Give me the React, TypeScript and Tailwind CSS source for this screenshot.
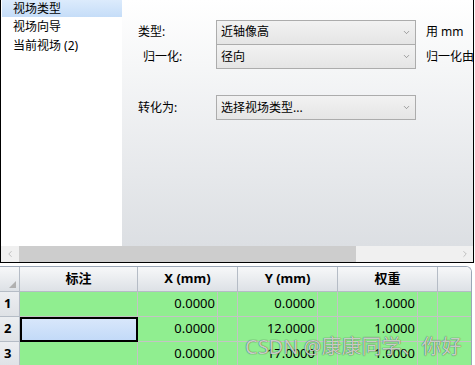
import { ChevronDown, ChevronLeft, ChevronRight } from 'lucide-react';

// Field-type editor panel: tree on the left, option form on the right,
// data grid of field points underneath.

const TREE_ITEMS = ['视场类型', '视场向导', '当前视场 (2)'];

const ROWS = [
  { id: 1, x: '0.0000', y: '0.0000', w: '1.0000' },
  { id: 2, x: '0.0000', y: '12.0000', w: '1.0000' },
  { id: 3, x: '0.0000', y: '17.0000', w: '1.0000' },
];

function Select({ value }: { value: string }) {
  return (
    <div className="w-[200px] shrink-0 h-[25px] border border-[#acacac] bg-gradient-to-b from-[#f2f2f2] to-[#e5e5e5] flex items-center justify-between pl-[4px] pr-[4px]">
      <span className="text-[12px] text-black">{value}</span>
      <ChevronDown size={9} strokeWidth={1.5} className="text-[#606060]" />
    </div>
  );
}

function App() {
  return (
    <div
      className="w-[475px] h-[365px] bg-white relative overflow-hidden text-black"
      style={{ fontFamily: '"Noto Sans", "Noto Sans CJK SC", sans-serif' }}
    >
      {/* Top panel */}
      <div className="w-[474px] h-[263px] border-l border-r border-b border-black flex flex-col">
        <div className="flex h-[246px]">
          {/* Tree */}
          <div className="w-[121px] shrink-0 bg-white pl-[1px]">
            {TREE_ITEMS.map((item, i) => (
              <div
                key={item}
                className={`pl-[11px] flex items-center text-[12px] leading-none ${
                  i === 0 ? 'h-[17px] bg-gradient-to-b from-[#dcebfc] to-[#c5ddf8]' : 'h-[19px]'
                }`}
              >
                {item}
              </div>
            ))}
          </div>
          {/* Form */}
          <div className="flex-1 min-w-0 bg-gradient-to-b from-white to-[#dcdfe3] pt-[20px] pl-[16px] overflow-hidden">
            <div className="flex items-center h-[24px]">
              <span className="w-[78px] shrink-0 text-[12px]">类型:</span>
              <Select value="近轴像高" />
              <span className="ml-[10px] shrink-0 text-[12px] whitespace-nowrap">用 mm</span>
            </div>
            <div className="flex items-center h-[25px]">
              <span className="w-[78px] shrink-0 pl-[5px] text-[12px]">归一化:</span>
              <Select value="径向" />
              <span className="ml-[10px] shrink-0 text-[12px] whitespace-nowrap">归一化由</span>
            </div>
            <div className="flex items-center h-[25px] mt-[26px]">
              <span className="w-[78px] shrink-0 text-[12px]">转化为:</span>
              <Select value="选择视场类型..." />
            </div>
          </div>
        </div>
        {/* Horizontal scrollbar */}
        <div className="h-[16px] flex bg-[#f0f0f0]">
          <div className="w-[18px] flex items-center justify-center">
            <ChevronLeft size={10} strokeWidth={1.5} className="text-[#a0a0a0]" />
          </div>
          <div className="w-[337px] bg-[#cdcdcd]" />
          <div className="flex-1" />
          <div className="w-[16px] flex items-center justify-center">
            <ChevronRight size={10} strokeWidth={1.5} className="text-[#a0a0a0]" />
          </div>
        </div>
      </div>

      {/* Data grid */}
      <div className="mt-[3px] w-[472px] border-t border-r border-[#9aa6b6] rounded-tr-[6px] overflow-hidden">
        <div className="grid grid-cols-[20px_118px_100px_100px_100px_33px] h-[25px] bg-gradient-to-b from-[#f7f8f9] to-[#dde1e6] border-b border-[#b5bcc6] text-[13px] font-bold">
          <div className="border-r border-[#b5bcc6] relative">
            <div className="absolute right-[3px] bottom-[3px] w-0 h-0 border-l-[7px] border-l-transparent border-b-[7px] border-b-[#b0b0b0]" />
          </div>
          <div className="border-r border-[#b5bcc6] flex items-center justify-center">标注</div>
          <div className="border-r border-[#b5bcc6] flex items-center justify-center">X (mm)</div>
          <div className="border-r border-[#b5bcc6] flex items-center justify-center">Y (mm)</div>
          <div className="border-r border-[#b5bcc6] flex items-center justify-center">权重</div>
          <div />
        </div>
        {ROWS.map(row => (
          <div
            key={row.id}
            className="grid grid-cols-[20px_118px_80px_20px_80px_20px_80px_20px_34px] h-[25px] text-[13px]"
          >
            <div className="bg-gradient-to-b from-[#eceef1] to-[#dfe2e6] border-r border-b border-[#b5bcc6] flex items-center pl-[4px] font-bold">
              {row.id}
            </div>
            {row.id === 2 ? (
              <div className="bg-gradient-to-b from-[#d8e7fb] to-[#c3daf8] border-2 border-black" />
            ) : (
              <div className="bg-[#90ee90] border-r border-b border-[#c4c4c4]" />
            )}
            <div className="bg-[#90ee90] border-r border-b border-[#c4c4c4] flex items-center justify-end pr-[2px]">{row.x}</div>
            <div className="bg-[#90ee90] border-r border-b border-[#c4c4c4]" />
            <div className="bg-[#90ee90] border-r border-b border-[#c4c4c4] flex items-center justify-end pr-[2px]">{row.y}</div>
            <div className="bg-[#90ee90] border-r border-b border-[#c4c4c4]" />
            <div className="bg-[#90ee90] border-r border-b border-[#c4c4c4] flex items-center justify-end pr-[2px]">{row.w}</div>
            <div className="bg-[#90ee90] border-r border-b border-[#c4c4c4]" />
            <div className="bg-[#90ee90] border-b border-[#c4c4c4]" />
          </div>
        ))}
      </div>

      {/* Watermark */}
      <div
        className="absolute left-[245px] top-[337px] text-[20px] leading-none text-white/75 whitespace-nowrap [text-shadow:0_0_1px_rgba(0,0,0,0.9)]"
        style={{ fontFamily: '"Noto Sans", "Noto Sans CJK SC", sans-serif' }}
      >
        CSDN @康康同学、你好
      </div>
    </div>
  );
}

export default App;
